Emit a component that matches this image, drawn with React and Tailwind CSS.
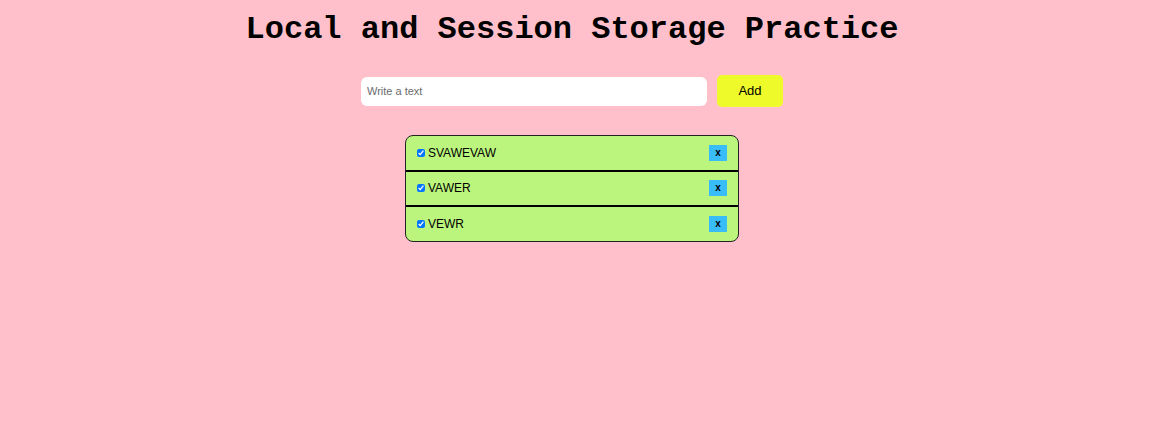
import React from "react";

const items = ["SVAWEVAW", "VAWER", "VEWR"];

export default function App() {
  return (
    <div className="min-h-[431px] w-full bg-[#ffc0cb] pr-[7px] font-['Liberation_Sans',Arial,sans-serif] text-black">
      <h1 className="pt-[12px] text-center font-['Liberation_Mono','Courier_New',monospace] text-[32px] font-bold leading-[36px]">
        Local and Session Storage Practice
      </h1>
      <div className="mt-[27px] flex items-center justify-center gap-[10px]">
        <input
          type="text"
          placeholder="Write a text"
          className="h-[29px] w-[346px] rounded-[6px] bg-white px-[6px] text-[11px] outline-none placeholder:text-[#6b6b6b]"
        />
        <button className="h-[32px] w-[66px] rounded-[5px] bg-[#effa2b] text-[13px] text-black">
          Add
        </button>
      </div>
      <div className="mt-[28px] flex justify-center">
        <ul className="w-[334px] overflow-hidden rounded-[8px] border border-[#222] bg-[#bcf57e]">
          {items.map((t, i) => (
            <li
              key={t}
              className={`flex items-center justify-between pl-[11px] pr-[11px] ${
                i < items.length - 1 ? "h-[35.5px] border-b-2 border-black" : "h-[34px]"
              }`}
            >
              <label className="flex items-center gap-[3px] text-[12px]">
                <input type="checkbox" defaultChecked className="m-0 h-[8px] w-[8px]" />
                <span>{t}</span>
              </label>
              <button className="flex h-[16px] w-[18px] items-center justify-center bg-[#38bdf8] text-[10px] font-bold leading-none">
                x
              </button>
            </li>
          ))}
        </ul>
      </div>
    </div>
  );
}
